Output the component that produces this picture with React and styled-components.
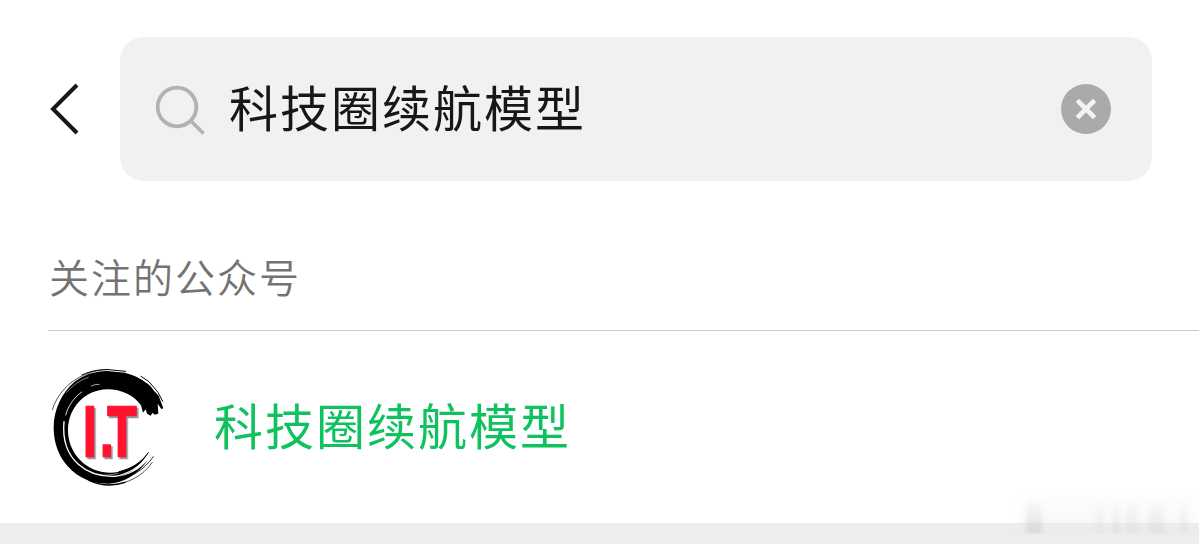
import React from "react";
import styled, { createGlobalStyle } from "styled-components";

const GlobalStyle = createGlobalStyle`
  * {
    box-sizing: border-box;
  }

  body {
    margin: 0;
    background: #fff;
    font-family: "Noto Sans CJK SC", sans-serif;
  }
`;

const Page = styled.div`
  position: relative;
  display: flex;
  flex-direction: column;
  height: 544px;
  overflow: hidden;
  background: #fff;
`;

const Header = styled.header`
  display: flex;
  align-items: center;
  padding: 37px 47px 0 48px;
`;

const BackButton = styled.button`
  display: flex;
  width: 72px;
  padding: 0;
  border: 0;
  background: none;
`;

const SearchBox = styled.div`
  flex: 1;
  display: flex;
  align-items: center;
  height: 144px;
  padding: 0 41px 0 34px;
  border-radius: 24px;
  background: #f1f1f1;
`;

const Name = styled.span`
  flex: 1;
  margin-bottom: 7px;
  color: ${(props) => props.$color};
  font-size: 49px;
  line-height: 72px;
  letter-spacing: 2px;
  white-space: nowrap;
`;

const SearchText = styled(Name)`
  margin: 0 0 6px 21px;
`;

const SectionTitle = styled.h2`
  margin: 65px 0 0 48px;
  height: 85px;
  padding-left: 1px;
  border-bottom: 1px solid #cbcbcb;
  color: #737373;
  font-size: 40px;
  font-weight: 350;
  line-height: 60px;
  letter-spacing: 2px;
`;

const Account = styled.div`
  display: flex;
  align-items: center;
  gap: 46px;
  height: 192px;
  padding: 0 48px;
`;

const Letters = styled.g`
  filter: drop-shadow(5px 6px 1px #999);
`;

const Divider = styled.div`
  flex: 1;
  background: #ededed;
`;

/* mancha clara sobre o canto inferior */
const Smudge = styled.div`
  position: absolute;
  right: 0;
  bottom: 10px;
  display: flex;
  width: 185px;
  height: 42px;
  background: linear-gradient(rgba(236, 236, 236, 0), rgba(236, 236, 236, 0.35) 70%, #ebebeb);
  mask-image: linear-gradient(to right, transparent, #000 16px, #000 170px, rgba(0, 0, 0, 0.4));
`;

const Streak = styled.i`
  width: ${(props) => props.$width}px;
  margin-left: ${(props) => props.$gap}px;
  background: linear-gradient(transparent 15%, ${(props) => props.$color});
  filter: blur(2px);
  opacity: 0.55;
`;

const BackIcon = () => (
  <svg width="34" height="56" viewBox="0 0 34 56" fill="none">
    <path d="M29 4 5 28l24 24" stroke="#171717" strokeWidth="4" />
  </svg>
);

const SearchIcon = () => (
  <svg width="54" height="54" viewBox="0 0 54 54" fill="none" stroke="#b2b2b2" strokeWidth="3.8">
    <circle cx="23" cy="25" r="19.3" />
    <path d="m36.5 38.5 13 13" />
  </svg>
);

const ClearIcon = () => (
  <svg width="50" height="50" viewBox="0 0 50 50" fill="none">
    <circle cx="25" cy="25" r="25" fill="#aaa" />
    <path d="m16.4 16.4 17.2 17.2M33.6 16.4 16.4 33.6" stroke="#f3f3f3" strokeWidth="4.8" />
  </svg>
);

const Logo = () => (
  <svg width="120" height="120" viewBox="24 36 360 360">
    {/* pincelada principal */}
    <path d="M41 218C41 165 65 113 103 81C130 59 165 49 201 48L255 53C284 60 311 74 331 93L342 107L356 122L370 160L364 162L353 146L355 176L344 179L338 173L332 182L321 176L317 163L309 173L303 151C282 121 244 103 202 103C136 104 85 157 84 225C84 278 115 324 163 344C189 354 216 355 237 350C270 343 303 324 325 292C306 331 274 357 232 365C263 362 300 345 325 313C294 359 250 384 207 386C149 388 100 360 70 317C50 287 41 252 41 218Z" />
    <g fill="none" stroke="#fff" strokeLinecap="round">
      <path d="M72 200C67 253 82 298 115 328C144 354 183 366 225 364" strokeWidth="4" />
      <path d="M77 180C84 154 101 128 125 111" strokeWidth="2.5" />
      <path d="M80 112C98 91 119 76 145 67" strokeWidth="1.5" />
      <path d="M154 93C160 90 168 88 177 88" strokeWidth="2" />
      <path d="M150 350C175 362 205 363 235 355" strokeWidth="1.5" />
      <path d="M225 364C270 356 304 330 324 300" strokeWidth="4" />
      <path d="M258 53C279 58 304 69 320 83" strokeWidth="1.5" />
    </g>
    <g fill="none" stroke="#000" strokeLinecap="round">
      <path d="M37 164C51 118 88 78 132 60C158 49 182 44 204 43" strokeWidth="2" />
      <path d="M126 60C156 45 192 41 225 46L257 49" strokeWidth="3" />
      <path d="M303 64 327 80 354 112 368 139" strokeWidth="3" />
      <path d="M237 350C274 342 304 323 325 293" strokeWidth="3" />
      <path d="M225 376C270 370 312 346 340 305" strokeWidth="2.5" />
      <path d="M207 389C263 388 308 364 337 322" strokeWidth="2" />
      <path d="M147 376C190 396 228 391 255 382" strokeWidth="4" />
    </g>
    <Letters>
      <text
        transform="translate(130 304) scale(.68 1)"
        x="0 75 107"
        y="0"
        fill="#ff1330"
        stroke="#ff1330"
        strokeWidth="8"
        fontFamily="Liberation Sans, Arial, sans-serif"
        fontSize="209"
        fontWeight="700"
      >
        I.T
      </text>
    </Letters>
  </svg>
);

const streaks = [
  { width: 17, gap: 11, color: "#cccccc" },
  { width: 7, gap: 54, color: "#dfdfdf" },
  { width: 7, gap: 10, color: "#dadada" },
  { width: 12, gap: 6, color: "#dddddd" },
  { width: 15, gap: 11, color: "#d8d8d8" },
  { width: 7, gap: 17, color: "#dddddd" },
];

const App = () => {
  return (
    <Page>
      <GlobalStyle />
      <Header>
        <BackButton aria-label="返回">
          <BackIcon />
        </BackButton>
        <SearchBox>
          <SearchIcon />
          <SearchText $color="#171717">科技圈续航模型</SearchText>
          <ClearIcon />
        </SearchBox>
      </Header>
      <SectionTitle>关注的公众号</SectionTitle>
      <Account>
        <Logo />
        <Name $color="#10c160">科技圈续航模型</Name>
      </Account>
      <Divider />
      <Smudge>
        {streaks.map((streak, i) => (
          <Streak key={i} $width={streak.width} $gap={streak.gap} $color={streak.color} />
        ))}
      </Smudge>
    </Page>
  );
};

export default App;
